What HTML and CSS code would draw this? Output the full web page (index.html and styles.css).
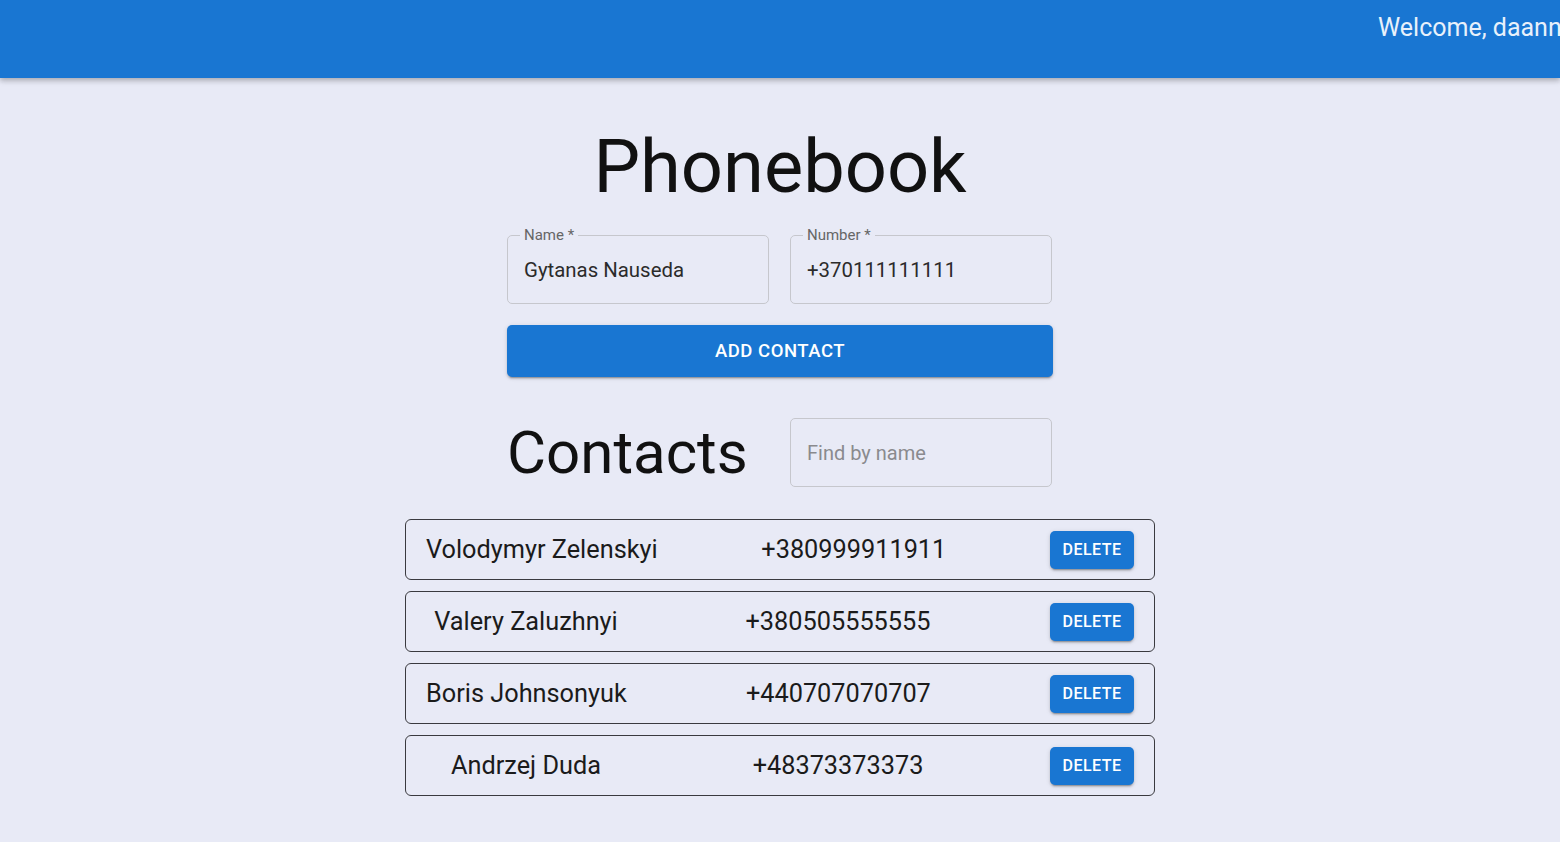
FILE: index.html
```html
<!DOCTYPE html>
<html lang="en">
<head>
<meta charset="utf-8">
<title>Phonebook</title>
<link rel="stylesheet" href="styles.css">
</head>
<body>
<header class="app-bar">
  <div class="app-bar__spacer"></div>
  <div class="user-menu">
    <span class="user-menu__greeting">Welcome, daannyy</span>
  </div>
</header>
<main class="page">
  <h1 class="page__title">Phonebook</h1>
  <form class="contact-form">
    <div class="contact-form__fields">
      <fieldset class="field">
        <legend class="field__label">Name *</legend>
        <input class="field__input" type="text" value="Gytanas Nauseda">
      </fieldset>
      <fieldset class="field">
        <legend class="field__label">Number *</legend>
        <input class="field__input" type="text" value="+370111111111">
      </fieldset>
    </div>
    <button class="btn btn--large" type="button">Add contact</button>
  </form>
  <div class="contacts-head">
    <h2 class="contacts-head__title">Contacts</h2>
    <div class="search">
      <input class="search__input" type="text" placeholder="Find by name">
    </div>
  </div>
  <ul class="contact-list">
    <li class="contact">
      <span class="contact__name">Volodymyr Zelenskyi</span>
      <span class="contact__number">+380999911911</span>
      <button class="btn btn--small" type="button">Delete</button>
    </li>
    <li class="contact">
      <span class="contact__name">Valery Zaluzhnyi</span>
      <span class="contact__number">+380505555555</span>
      <button class="btn btn--small" type="button">Delete</button>
    </li>
    <li class="contact">
      <span class="contact__name">Boris Johnsonyuk</span>
      <span class="contact__number">+440707070707</span>
      <button class="btn btn--small" type="button">Delete</button>
    </li>
    <li class="contact">
      <span class="contact__name">Andrzej Duda</span>
      <span class="contact__number">+48373373373</span>
      <button class="btn btn--small" type="button">Delete</button>
    </li>
  </ul>
</main>
</body>
</html>
```
FILE: styles.css
```css
* { box-sizing: border-box; }

html, body {
  margin: 0;
  padding: 0;
}

body {
  background: #e8eaf6;
  font-family: Roboto, "Liberation Sans", sans-serif;
  color: #111;
  overflow-x: hidden;
  min-height: 842px;
}

.app-bar {
  display: flex;
  height: 78px;
  background: #1976d2;
  box-shadow: 0 2px 5px rgba(0,0,0,0.22), 0 4px 6px rgba(0,0,0,0.08);
  padding-top: 13px;
  overflow: hidden;
}

.app-bar__spacer { flex: 1; }

.user-menu {
  flex: 0 0 182px;
  width: 182px;
  min-width: 0;
  display: flex;
  align-items: flex-start;
  white-space: nowrap;
}

.user-menu__greeting {
  flex-shrink: 0;
  color: #e8f1fb;
  font-size: 25px;
  line-height: 30px;
  font-weight: 400;
}

.page {
  display: flex;
  flex-direction: column;
  align-items: center;
}

.page__title {
  margin: 39px 0 0;
  font-size: 74px;
  font-weight: 400;
  line-height: 100px;
  color: #111;
}

.contact-form {
  width: 546px;
  margin-top: 10px;
  display: flex;
  flex-direction: column;
  gap: 21px;
}

.contact-form__fields {
  display: flex;
  gap: 21px;
}

.field {
  flex: 0 0 262px;
  margin: 0;
  padding: 0 16px 6px;
  border: 1px solid #c6c7cd;
  border-radius: 5px;
}

.field__label {
  padding: 0 4px;
  margin-left: -4px;
  font-size: 15px;
  line-height: 16px;
  color: #666;
}

.field__input {
  display: block;
  width: 100%;
  height: 54px;
  border: 0;
  padding: 0;
  background: transparent;
  font: 400 20.4px Roboto, sans-serif;
  color: #2b2b2b;
  outline: none;
}

.btn {
  border: 0;
  background: #1976d2;
  color: #fff;
  font-family: Roboto, sans-serif;
  font-weight: 500;
  text-transform: uppercase;
  letter-spacing: 0.02857em;
  border-radius: 5px;
  box-shadow: 0 3px 1px -2px rgba(0,0,0,0.2), 0 2px 2px 0 rgba(0,0,0,0.14), 0 1px 5px 0 rgba(0,0,0,0.12);
  cursor: pointer;
}

.btn--large {
  height: 52px;
  font-size: 18.5px;
}

.btn--small {
  height: 38px;
  width: 84px;
  font-size: 16px;
  padding: 0;
}

.contacts-head {
  width: 546px;
  margin-top: 41px;
  display: flex;
  justify-content: space-between;
  align-items: center;
}

.contacts-head__title {
  margin: 0;
  font-size: 60px;
  font-weight: 400;
  line-height: 69px;
  color: #111;
}

.search {
  width: 262px;
  height: 69px;
  margin-right: 1px;
  border: 1px solid #c6c7cd;
  border-radius: 5px;
  padding: 0 16px;
  display: flex;
  align-items: center;
}

.search__input {
  width: 100%;
  border: 0;
  padding: 0;
  background: transparent;
  font: 400 20px Roboto, sans-serif;
  color: #2b2b2b;
  outline: none;
}

.search__input::placeholder { color: #8a8a8e; }

.contact-list {
  list-style: none;
  margin: 32px 0 0;
  padding: 0;
  width: 750px;
  display: flex;
  flex-direction: column;
  gap: 11px;
}

.contact {
  height: 61px;
  border: 1px solid #3a3a3f;
  border-radius: 6px;
  padding: 0 20px 0 20px;
  display: flex;
  align-items: center;
  justify-content: space-between;
  font-size: 25.3px;
  color: #1b1b1b;
}

.contact__name {
  min-width: 200px;
  text-align: center;
}
```
